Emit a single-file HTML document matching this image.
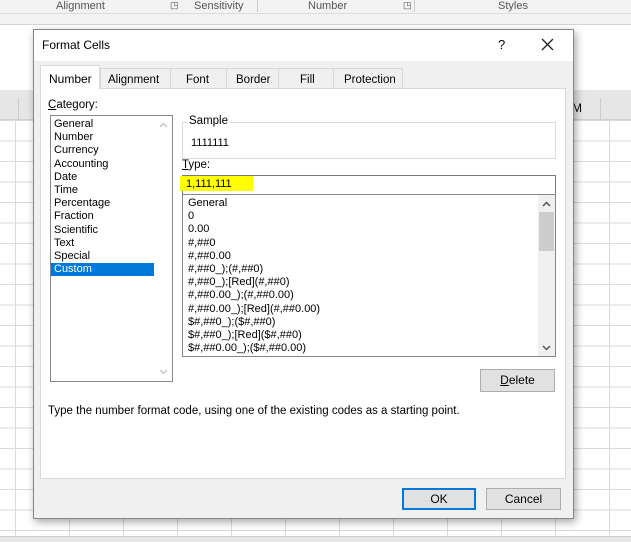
<!DOCTYPE html><html><head><style>
*{margin:0;padding:0;box-sizing:border-box}
body{width:631px;height:542px;overflow:hidden;background:#fff;font-family:"Liberation Sans",sans-serif;font-size:11px;color:#000;position:relative}
.a{position:absolute}
.grid{left:0;top:120px;width:631px;height:422px;background-image:linear-gradient(#dadada 1px,transparent 1px),linear-gradient(90deg,#dadada 1px,transparent 1px);background-size:54px 20.5px;background-position:15px 0}
.li div{height:13.2px;line-height:13.2px;padding-left:3px}
.btn{background:#e1e1e1;border:1px solid #adadad;text-align:center;line-height:20px;font-size:12px}
</style></head><body>
<div class="a" style="left:0;top:0;width:631px;height:14px;background:#f3f3f3;border-bottom:1px solid #dcdcdc;color:#555;font-size:11px">
<span class="a" style="left:56px;top:0">Alignment</span><span class="a" style="left:170px;top:0;font-size:9px">◳</span>
<span class="a" style="left:194px;top:0">Sensitivity</span><span class="a" style="left:257px;top:0;width:1px;height:12px;background:#ccc"></span>
<span class="a" style="left:308px;top:0">Number</span><span class="a" style="left:403px;top:0;font-size:9px">◳</span>
<span class="a" style="left:414px;top:0;width:1px;height:12px;background:#ccc"></span>
<span class="a" style="left:498px;top:0">Styles</span></div>
<div class="a" style="left:0;top:14px;width:631px;height:11px;background:#f3f3f3;border-bottom:1px solid #d4d4d4"></div>
<div class="a" style="left:0;top:90px;width:631px;height:30px;background:#e6e6e6;border-bottom:1px solid #cfcfcf"></div>
<div class="a" style="left:600px;top:98px;width:1px;height:22px;background:#ccc"></div>
<div class="a" style="left:18px;top:98px;width:1px;height:22px;background:#ccc"></div>
<div class="a" style="left:572px;top:101px;font-size:12px">M</div>
<div class="a grid"></div>
<div class="a" style="left:0;top:536px;width:631px;height:6px;background:#e6e6e6;border-top:1px solid #ccc"></div>
<!-- dialog -->
<div class="a" style="left:33px;top:29px;width:541px;height:490px;background:#f0f0f0;border:1px solid #888;box-shadow:2px 3px 8px rgba(0,0,0,.35)">
<div class="a" style="left:0;top:0;width:539px;height:31px;background:#fff"></div>
<div class="a" style="left:8px;top:8px;font-size:12px">Format Cells</div>
<div class="a" style="left:464px;top:7px;font-size:13px">?</div>
<svg class="a" style="left:507px;top:8px" width="13" height="13"><path d="M1 1L12 12M12 1L1 12" stroke="#222" stroke-width="1.3"/></svg>
<!-- tabs -->
<div class="a" style="left:66px;top:38px;width:303px;height:21px;background:#f0f0f0;border:1px solid #d9d9d9;border-bottom:none"></div>
<div class="a" style="left:6px;top:35px;width:60px;height:25px;background:#fff;border:1px solid #d9d9d9;border-bottom:none;font-size:12px;padding:6px 0 0 8px">Number</div>
<div class="a" style="left:74px;top:44px;font-size:11.5px">Alignment</div>
<div class="a" style="left:136px;top:38px;width:1px;height:21px;background:#d9d9d9"></div>
<div class="a" style="left:152px;top:44px;font-size:11.5px">Font</div>
<div class="a" style="left:192px;top:38px;width:1px;height:21px;background:#d9d9d9"></div>
<div class="a" style="left:202px;top:44px;font-size:11.5px">Border</div>
<div class="a" style="left:244px;top:38px;width:1px;height:21px;background:#d9d9d9"></div>
<div class="a" style="left:266px;top:44px;font-size:11.5px">Fill</div>
<div class="a" style="left:299px;top:38px;width:1px;height:21px;background:#d9d9d9"></div>
<div class="a" style="left:310px;top:44px;font-size:11.5px">Protection</div>
<div class="a" style="left:6px;top:59px;width:526px;height:390px;background:#fff;border:1px solid #d9d9d9;border-top:none">
<div class="a" style="left:59px;top:-1px;width:466px;height:1px;background:#d9d9d9"></div>
</div>
<div class="a" style="left:14px;top:69px;font-size:11.5px"><u>C</u>ategory:</div>
<div class="a li" style="left:16px;top:85px;width:123px;height:267px;background:#fff;border:1px solid #828790;padding-top:2px">
<div>General</div><div>Number</div><div>Currency</div><div>Accounting</div><div>Date</div><div>Time</div><div>Percentage</div><div>Fraction</div><div>Scientific</div><div>Text</div><div>Special</div><div style="background:#0078d7;color:#fff;width:103px">Custom</div>
<div class="a" style="right:0;top:0;width:17px;height:265px;background:#fff">
<svg class="a" style="left:4px;top:6px" width="9" height="6"><path d="M1 5L4.5 1.5L8 5" stroke="#c4c4c4" stroke-width="1.3" fill="none"/></svg>
<svg class="a" style="left:4px;bottom:6px" width="9" height="6"><path d="M1 1L4.5 4.5L8 1" stroke="#c4c4c4" stroke-width="1.3" fill="none"/></svg></div>
</div>
<div class="a" style="left:148px;top:92px;width:374px;height:37px;border:1px solid #dcdcdc"></div>
<div class="a" style="left:153px;top:85px;background:#fff;padding:0 2px;font-size:11.5px">Sample</div>
<div class="a" style="left:157px;top:107px">1111111</div>
<div class="a" style="left:148px;top:129px;font-size:11.5px"><u>T</u>ype:</div>
<div class="a" style="left:148px;top:145px;width:374px;height:20px;border:1px solid #7a7a7a;background:#fff"></div>
<div class="a" style="left:146px;top:146px;width:73px;height:15px;background:#ffff00"></div>
<div class="a" style="left:152px;top:148px">1,111,111</div>
<div class="a li" style="left:148px;top:164px;width:374px;height:163px;border:1px solid #828790;background:#fff;padding-top:2px;padding-left:2px">
<div>General</div><div>0</div><div>0.00</div><div>#,##0</div><div>#,##0.00</div><div>#,##0_);(#,##0)</div><div>#,##0_);[Red](#,##0)</div><div>#,##0.00_);(#,##0.00)</div><div>#,##0.00_);[Red](#,##0.00)</div><div>$#,##0_);($#,##0)</div><div>$#,##0_);[Red]($#,##0)</div><div>$#,##0.00_);($#,##0.00)</div>
<div class="a" style="right:0;top:0;width:17px;height:161px;background:#f0f0f0">
<svg class="a" style="left:4px;top:6px" width="9" height="6"><path d="M1 5L4.5 1.5L8 5" stroke="#555" stroke-width="1.5" fill="none"/></svg>
<div class="a" style="left:1px;top:17px;width:15px;height:39px;background:#cdcdcd"></div>
<svg class="a" style="left:4px;bottom:5px" width="9" height="6"><path d="M1 1L4.5 4.5L8 1" stroke="#555" stroke-width="1.5" fill="none"/></svg></div>
</div>
<div class="a btn" style="left:446px;top:339px;width:75px;height:23px"><u>D</u>elete</div>
<div class="a" style="left:14px;top:375px;font-size:11.5px">Type the number format code, using one of the existing codes as a starting point.</div>
<div class="a btn" style="left:368px;top:458px;width:74px;height:22px;border:2px solid #0078d7;line-height:18px">OK</div>
<div class="a btn" style="left:452px;top:458px;width:75px;height:22px">Cancel</div>
</div>
</body></html>
